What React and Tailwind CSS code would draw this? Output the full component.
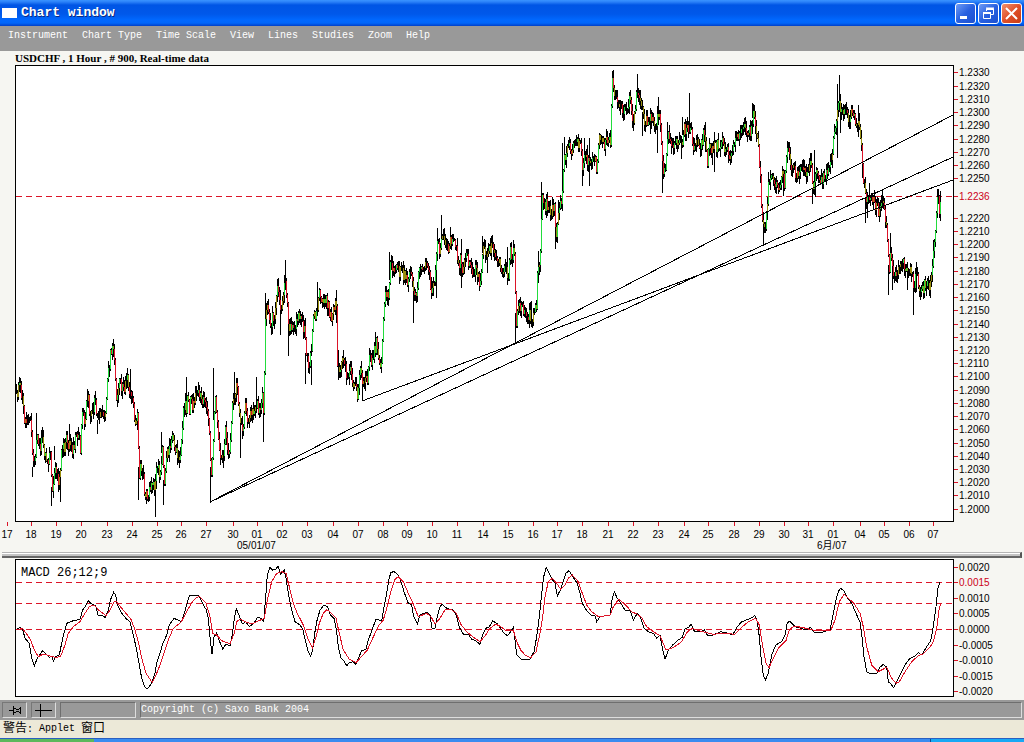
import React from 'react';

const MENU_ITEMS = ['Instrument', 'Chart Type', 'Time Scale', 'View', 'Lines', 'Studies', 'Zoom', 'Help'];

const MONO = "font-['Liberation_Mono','Noto_Sans_CJK_SC',monospace]";

const DATE_TICKS = [
  [7, '17'], [31, '18'], [56, '19'], [81, '20'], [107, '23'], [132, '24'], [157, '25'], [181, '26'],
  [206, '27'], [233, '30'], [257, '01'], [282, '02'], [307, '03'], [333, '04'], [358, '07'], [383, '08'],
  [407, '09'], [432, '10'], [457, '11'], [483, '14'], [508, '15'], [533, '16'], [557, '17'], [582, '18'],
  [608, '21'], [633, '22'], [658, '23'], [684, '24'], [708, '25'], [734, '28'], [759, '29'], [784, '30'],
  [808, '31'], [833, '01'], [860, '04'], [884, '05'], [909, '06'], [933, '07'],
];

const MACD_TICKS = [
  [568, '0.0020'], [583, '0.0015'], [599, '0.0010'], [614, '0.0005'], [630, '0.0000'],
  [646, '-0.0005'], [661, '-0.0010'], [677, '-0.0015'], [692, '-0.0020'],
];

// Every series is kept in sections: an origin, then points on a grid of thirds.
// closes are "x,y", spikes are "x,high,low".
const PRICE = [
  {
    x: 0, y: 320,
    closes: '48,215 58,205 62,225 68,225 72,300 80,310 84,290 92,320 97,440 104,430 108,380 113,350 120,380 126,350 133,400 142,440 150,405 156,510 163,440 170,460 176,490 182,400 187,370 192,400 197,345 203,375 208,345 215,400 222,370 232,345 240,380 245,265 253,300 262,225 268,280 275,275 283,245 293,310 300,260 315,280 322,180 330,105 338,90 343,120 348,230 357,185 370,210 380,175 388,210 397,250 405,310 411,290 417,460 425,430 433,515 445,520 452,490 457,510 465,480 472,430 480,470 486,400 492,490 500,400 510,385 517,350 525,380 538,410 545,360 550,250 558,270 563,230 567,280 570,215 577,270 585,215 600,230 607,255 614,220 622,290 628,370 633,470 638,410 641,300 645,215 650,290 660,420 668,420 674,320 684,400 692,350 695,240 703,215 710,200 716,270 722,330 728,320 735,260 745,320 749,290',
    spikes: '58,177,215 109,280,400 127,320,370 155,500,557 162,377,420 181,480,545 208,313,380 261,207,260 293,300,343 340,60,110 337,68,120 391,148,220 411,275,330 416,440,540 466,500,590 485,335,400 490,480,555 538,400,443 560,172,290 640,145,300 632,440,548 671,400,445 703,155,230 721,320,413 97,440,470',
  },
  {
    x: 250, y: 240,
    closes: '0,515 10,510 20,480 26,520 36,470 41,530 43,300 47,215 52,205 58,255 65,240 75,215 83,135 90,220 97,170 104,100 110,170 116,270 122,250 132,270 140,230 152,250 163,275 168,360 178,370 185,300 190,200 197,225 204,165 213,180 225,170 238,220 244,250 250,195 258,200 261,360 268,385 280,360 290,405 297,385 308,420 320,465 332,390 340,445 350,420 357,350 365,370 378,310 385,360 393,375 400,230 407,150 414,185 420,75 430,105 440,90 455,100 470,120 482,85 490,170 500,150 507,65',
    spikes: '20,410,520 41,500,605 46,158,300 105,60,150 91,150,285 115,200,347 167,340,433 184,360,436 202,127,200 260,150,250 265,330,420 337,430,482 376,275,330 394,350,398 418,35,120 490,150,250',
  },
  {
    x: 420, y: 180,
    closes: '0,250 20,250 35,345 45,270 52,180 57,210 65,160 75,205 90,190 105,185 115,260 120,240 127,290 137,220 145,250 157,290 165,260 180,310 188,200 202,230 213,200 225,225 240,245 247,285 257,240 262,300 270,220 278,220 283,230 287,440 293,385 305,390 322,400 335,425 343,390 349,370 352,250 358,260 362,130 365,60 372,85 380,70 388,95 402,85 407,160 413,110 418,70 427,40',
    spikes: '34,290,357 52,143,230 64,105,180 49,250,355 91,142,200 124,178,325 187,168,220 197,180,250 202,230,280 262,200,315 280,180,250 286,400,490 335,363,435 355,213,310 364,7,110 406,140,208 415,60,130',
  },
  {
    x: 540, y: 65,
    closes: '70,260 78,270 85,245 98,255 110,235 120,240 126,315 133,270 140,285 148,290 155,265 163,270 168,330 177,225 190,240 203,225 210,240 213,120 216,45 222,80 230,115 238,140 248,130 257,140 267,105 277,165 285,150 290,60 298,100 310,170 325,160 335,165 350,170 356,130 361,180 367,310 373,315 380,245 383,190 390,245 405,235 420,235 425,255 430,180 443,200 452,190 460,260 470,230 480,235 490,210 495,215 501,290 508,235 515,260 524,240 533,245 545,235 555,255 572,270 580,240 590,215 600,210 613,195 630,200 635,205 638,160 642,140 648,200 655,245 660,350 664,430 671,490',
    spikes: '74,215,300 67,235,400 127,290,363 134,220,310 148,220,363 142,240,310 216,18,100 292,28,90 308,140,213 331,130,207 352,180,265 355,97,180 367,290,383 383,170,220 448,85,200 428,155,210 424,240,283 496,170,260 524,200,320 517,240,300 638,115,160 670,440,540 686,320,420',
  },
  {
    x: 740, y: 65,
    closes: '73,500 80,410 87,340 95,330 102,360 108,345 117,375 127,330 132,350 137,270 142,245 150,305 158,290 165,330 180,320 192,325 202,320 212,300 219,370 227,320 238,350 255,335 268,320 275,260 283,190 290,140 297,110 303,150 312,145 325,160 335,130 345,180 355,180 362,210 366,310 372,360 378,420 388,385 397,400 410,430 420,440 427,400 435,480 441,510 446,620 452,560 460,650 468,620 480,605 490,600 502,640 508,610 520,660 528,630 535,660 543,690 553,660 562,665 572,650 576,600 582,530 587,450 592,390 597,440 602,400',
    spikes: '90,320,375 129,320,393 142,228,280 218,370,416 224,255,340 226,330,395 292,57,278 298,30,140 302,120,203 355,120,215 366,290,340 376,400,475 383,380,460 388,355,400 427,375,430 446,600,690 452,505,570 457,600,675 502,620,675 520,640,750 530,590,680 592,372,460 598,400,460 602,378,425 486,582,620 543,670,697 580,525,590',
  },
];

const MACD_LINE = [
  { x: 0, y: 550, points: '50,235 62,233 68,238 75,265 88,280 95,325 103,348 112,325 128,302 138,312 148,322 155,318 160,333 167,320 178,315 188,265 200,220 220,212 240,208 248,180 257,168 265,152 275,162 287,168 295,198 308,197 316,203 325,180 332,148 341,127 347,135 352,165 365,190 380,208 390,215 400,255 410,300 418,345 425,385 433,408 441,418 455,400 465,370 470,340 480,310 487,285 500,255 508,225 522,205 545,215 555,182 568,138 585,135 597,137 610,165 618,178 625,205 630,260 636,313 642,262 650,248 657,270 668,297 678,282 690,287 697,255 703,205 709,177 717,195 727,222 737,215 748,230 762,220 772,203 785,205 791,215 798,130 802,75 810,52 818,60 828,57 834,48 842,72 853,60 858,85 865,130 875,180 885,215 900,225 908,237 918,280 925,305 932,318 938,300 944,250 950,215 960,180 972,165 983,170' },
  { x: 330, y: 550, points: '0,193 12,205 20,245 25,290 33,325 42,333 50,347 58,338 68,335 78,343 85,325 95,302 108,298 115,270 128,235 138,207 147,210 155,213 162,170 170,130 176,90 183,67 192,65 205,75 213,95 222,125 235,160 245,165 250,195 262,222 270,195 290,187 300,195 306,235 315,235 322,200 330,170 337,163 350,175 370,180 380,200 388,232 402,255 415,252 425,268 437,272 450,283 458,255 468,235 478,230 488,213 500,220 512,235 522,250 533,257 545,240 550,232 555,270 560,315 575,330 600,327 612,305 620,260 628,200 635,130 641,80 649,52 658,70 668,90 675,100 682,138 692,118 700,92 708,70 717,62 728,80 742,100 750,130 757,160 770,182 782,195 795,198 800,215 810,200 840,195 847,145 853,125 862,145 872,160 885,180 900,180 910,210 922,190 932,203 942,235 955,245 970,250 980,265' },
  { x: 660, y: 550, points: '0,255 8,300 15,328 25,300 38,285 55,270 67,262 76,235 85,233 93,223 103,243 120,245 133,240 143,257 160,255 182,245 205,250 218,255 232,230 245,215 265,208 280,200 284,196 292,215 298,260 303,320 310,375 316,390 325,370 335,315 347,285 365,275 375,255 382,218 390,214 405,230 440,240 452,232 462,247 485,247 510,240 518,200 528,150 535,125 541,115 552,122 560,140 575,160 590,195 600,215 606,260 612,320 620,365 632,372 650,370 660,352 670,343 680,352 685,395 693,402 701,413 710,395 722,370 735,345 750,325 762,320 775,308 785,315 800,290 812,272 820,230 828,170 834,115 840,97' },
];

const SIGNAL_LINE = [
  { x: 0, y: 550, points: '50,238 68,236 80,252 92,270 103,300 115,320 130,312 150,318 170,323 182,318 195,285 205,250 220,230 240,215 255,190 268,170 282,165 298,182 318,197 330,180 342,155 350,155 365,175 380,193 393,208 405,240 415,275 425,325 438,370 457,398 470,370 480,345 492,310 505,270 520,235 543,217 560,185 575,158 590,142 600,140 618,160 630,200 638,250 650,255 665,272 690,281 703,250 710,215 720,207 735,215 755,222 775,213 793,205 803,145 815,95 830,70 845,65 858,70 868,110 880,160 892,190 910,225 925,270 937,293 947,265 958,220 970,190 980,180' },
  { x: 330, y: 550, points: '0,185 18,205 28,250 40,300 58,328 78,338 90,325 112,300 128,265 145,228 160,210 170,175 182,125 195,88 205,80 220,95 235,130 247,155 265,200 290,190 303,200 315,222 330,205 345,180 362,178 378,188 392,222 410,245 430,262 450,275 465,258 480,235 497,222 512,230 530,243 550,240 560,275 572,300 585,315 602,323 618,305 630,250 638,200 645,140 655,95 667,85 680,100 692,118 705,105 715,85 727,75 745,95 755,125 770,165 785,185 805,200 840,196 850,170 866,148 885,163 905,185 920,192 935,203 950,230 970,245' },
  { x: 660, y: 550, points: '0,257 18,300 40,293 65,275 80,248 95,235 120,243 160,253 190,250 225,253 245,232 265,215 287,205 298,225 308,290 318,340 327,353 340,325 355,295 378,272 388,240 402,228 430,233 470,243 512,242 525,210 538,155 552,133 565,145 582,160 600,190 610,230 620,290 635,345 655,365 680,352 695,385 708,400 718,395 735,365 755,335 775,317 790,312 810,292 820,275 830,235 837,180 842,160' },
];

const unpack = (section, key) =>
  section[key].split(' ').map((entry) => {
    const [px, ...ys] = entry.split(',').map(Number);
    return [section.x + px / 3, ...ys.map((v) => section.y + v / 3)];
  });

const toPoints = (sections) =>
  sections
    .flatMap((s) => unpack(s, 'points'))
    .map((p) => p.map((v) => v.toFixed(1)).join(','))
    .join(' ');

// Small deterministic generator, so the hourly bars are the same on every render
const createRandom = (start) => {
  let seed = start;
  return () => {
    seed = (seed * 1664525 + 1013904223) % 4294967296;
    return seed / 4294967296;
  };
};

const buildBars = () => {
  const random = createRandom(900);
  const closes = PRICE.flatMap((s) => unpack(s, 'closes'));
  const paths = { wick: '', up: '', down: '', flat: '' };
  const add = (key, x, top, bottom) => {
    paths[key] += `M${x} ${Math.round(top)}V${Math.round(bottom)}`;
  };

  PRICE.flatMap((s) => unpack(s, 'spikes')).forEach(([x, high, low]) => {
    add('wick', Math.floor(x) + 0.5, high, low);
  });

  let i = 0;
  let prev = closes[0][1];
  for (let x = 16; x <= 940; x += 1) {
    while (i < closes.length - 2 && closes[i + 1][0] < x) i += 1;
    const [x0, y0] = closes[i];
    const [x1, y1] = closes[i + 1];
    const t = Math.min(1, Math.max(0, (x - x0) / (x1 - x0)));
    const close = y0 + (y1 - y0) * t + (random() - 0.5) * 13;
    const top = Math.min(prev, close);
    const bottom = Math.max(prev, close);
    const move = bottom - top;
    const reach = move > 14 ? 1 : 7;
    add('wick', x + 0.5, top - random() * reach - 1, bottom + random() * reach + 1);
    if (move > 2) {
      const mixed = move < 12 && random() < 0.4;
      add(mixed ? 'flat' : close < prev ? 'up' : 'down', x + 0.5, top, bottom);
    }
    prev = close;
  }
  return paths;
};

const BARS = buildBars();

const AxisLabel = ({ x, y, red, children }) => (
  <text x={x} y={y} className={red ? 'fill-[#cc0018]' : 'fill-black'}>{children}</text>
);

const PriceChart = () => (
  <svg viewBox="0 65 1024 487" className="block w-full font-['Liberation_Sans','Noto_Sans_CJK_SC',sans-serif] text-[10px]" role="img" aria-label="USDCHF price chart">
    <rect x="15.5" y="65.5" width="938" height="456" fill="#fff" stroke="#000" shapeRendering="crispEdges" />
    <g fill="none" shapeRendering="crispEdges">
      <path d="M16 196.5H953" stroke="#dc1428" strokeDasharray="6 4" />
      <path d={BARS.wick} stroke="#000" />
      <path d={BARS.flat} stroke="#9a9010" />
      <path d={BARS.down} stroke="#dc1428" />
      <path d={BARS.up} stroke="#22dc3c" />
      <path d="M210 502L953 115M210 502L953 157M362 401L953 180" stroke="#000" />
    </g>

    {Array.from({ length: 34 }, (_, i) => i)
      .filter((i) => i !== 9 && i !== 10)
      .map((i) => {
        const y = Math.round(73.4 + i * 13.22);
        return (
          <g key={i}>
            <path d={`M954 ${y - 0.5}h4`} stroke="#dc1428" />
            <AxisLabel x={959} y={y + 3}>{(1.233 - i * 0.001).toFixed(4)}</AxisLabel>
          </g>
        );
      })}
    <path d="M954 196.5h4" stroke="#dc1428" />
    <AxisLabel x={959} y={200} red>1.2236</AxisLabel>

    {DATE_TICKS.map(([x, label]) => (
      <g key={x} textAnchor="middle">
        <path d={`M${x + 0.5} 522v4`} stroke="#dc1428" />
        <AxisLabel x={x} y={538}>{label}</AxisLabel>
      </g>
    ))}
    <AxisLabel x={237} y={549}>05/01/07</AxisLabel>
    <AxisLabel x={817} y={549}>6月/07</AxisLabel>
  </svg>
);

const MacdChart = () => (
  <svg viewBox="0 559 1024 141" className="block w-full font-['Liberation_Sans',sans-serif] text-[10px]" role="img" aria-label="MACD chart">
    <rect x="15.5" y="559.5" width="938" height="137" fill="#fff" stroke="#000" shapeRendering="crispEdges" />
    <g fill="none" shapeRendering="crispEdges">
      {[582, 603, 629].map((y) => (
        <line key={y} x1="16" y1={y + 0.5} x2="953" y2={y + 0.5} stroke="#dc1428" strokeDasharray="6 4" />
      ))}
      <polyline points={toPoints(MACD_LINE)} stroke="#000" />
      <polyline points={toPoints(SIGNAL_LINE)} stroke="#dc1428" />
    </g>
    <text x="21" y="576" className="fill-black font-['Liberation_Mono',monospace] text-[12px]">MACD 26;12;9</text>
    {MACD_TICKS.map(([y, label]) => (
      <g key={label}>
        <path d={`M954 ${y - 0.5}h4`} stroke="#dc1428" />
        <AxisLabel x={959} y={y + 3} red={label === '0.0015'}>{label}</AxisLabel>
      </g>
    ))}
  </svg>
);

const WindowButton = ({ label, tone, children }) => (
  <button type="button" aria-label={label} className={`flex size-[21px] items-center justify-center rounded-[3px] border border-white ${tone}`}>
    <svg viewBox="0 0 19 19" className="size-[19px]" fill="none" stroke="#fff" aria-hidden="true">
      {children}
    </svg>
  </button>
);

const TitleBar = () => (
  <header className="flex h-[26px] items-center bg-[linear-gradient(to_bottom,#3a93ff_0,#2a80f8_2px,#0055e5_5px,#0058ea_14px,#0068ff_20px,#0066fa_23px,#0040c8_26px)] pl-[2px] pr-[2px]">
    <span className="h-[10px] w-[15px] bg-white" />
    <h1 className={`${MONO} ml-1 flex-1 text-[13px] leading-[26px] font-bold text-white [text-shadow:1px_1px_0_#0a2a80]`}>
      Chart window
    </h1>
    <div className="flex gap-[2px]">
      <WindowButton label="Minimize" tone="bg-linear-to-br from-[#6e9bf5] via-[#2860e0] to-[#1c50d0]">
        <path d="M4 13.5h7" strokeWidth="3" />
      </WindowButton>
      <WindowButton label="Restore" tone="bg-linear-to-br from-[#6e9bf5] via-[#2860e0] to-[#1c50d0]">
        <path d="M7.5 7V4.5h7v6H12M7 4h8" />
        <path d="M4.5 8.5h7v6h-7zM4 8.5h8" />
        <path d="M4 9.5h8M7 5.5h8" />
      </WindowButton>
      <WindowButton label="Close" tone="bg-linear-to-br from-[#f0906c] via-[#e05028] to-[#c83c14]">
        <path d="M4 4l11 11M15 4l-11 11" strokeWidth="2" />
      </WindowButton>
    </div>
  </header>
);

const MenuBar = () => (
  <nav className={`${MONO} flex h-[25px] items-center gap-3.5 bg-[#999] pb-[5px] pl-2 text-[10px] leading-[12px] text-white`}>
    {MENU_ITEMS.map((item) => (
      <button key={item} type="button">{item}</button>
    ))}
  </nav>
);

const Splitter = () => (
  <div className="flex h-[7px] border-b border-[#f6f6f2] px-[2px]">
    <div className="flex-1 border-t border-r-2 border-b-2 border-t-[#b4b4b4] border-r-[#555] border-b-[#666] bg-[#c4c4c4]">
      <div className="h-px bg-white" />
    </div>
  </div>
);

const StatusBar = () => (
  <footer className={`${MONO} flex h-5 items-center gap-1 bg-[#999] px-[2px] text-[10px] leading-[12px] text-white`}>
    <button type="button" aria-label="Pin" className="flex h-4 w-[25px] items-center justify-center border border-t-[#777] border-r-[#ddd] border-b-[#ddd] border-l-[#777]">
      <svg viewBox="0 0 12 9" className="h-[9px] w-3" fill="none" stroke="#000" shapeRendering="crispEdges" aria-hidden="true">
        <path d="M0 4.5h4M4.5 0v9M5 2.5h2M5 6.5h2M7 3.5h3M7 5.5h3M10 2.5h1M10 6.5h1M11.5 1v7" />
      </svg>
    </button>
    <button type="button" aria-label="Crosshair" className="flex h-4 w-[25px] items-center justify-center border border-t-[#777] border-r-[#ddd] border-b-[#ddd] border-l-[#777]">
      <svg viewBox="0 0 17 13" className="h-[13px] w-[17px]" fill="none" stroke="#000" shapeRendering="crispEdges" aria-hidden="true">
        <path d="M0 6.5h17M5.5 0v13" />
      </svg>
    </button>
    <div className="h-4 w-[76px] border border-t-[#6e6e6e] border-r-[#ddd] border-b-[#ddd] border-l-[#6e6e6e]" />
    <div className="flex h-4 flex-1 items-center border border-t-[#6e6e6e] border-r-[#ddd] border-b-[#ddd] border-l-[#6e6e6e]">
      Copyright (c) Saxo Bank 2004
    </div>
  </footer>
);

const App = () => {
  return (
    <div className="w-full overflow-hidden bg-[#f6f6f2]">
      <TitleBar />
      <MenuBar />
      <main>
        <p className="h-[14px] pl-[15px] font-['Liberation_Serif',serif] text-[11px] leading-[14px] font-bold whitespace-pre text-black">
          USDCHF , 1 Hour , # 900, Real-time data
        </p>
        <PriceChart />
        <Splitter />
        <MacdChart />
      </main>
      <StatusBar />
      <p className={`${MONO} flex h-[18px] items-center gap-1.5 bg-[#ece9d8] pl-[3px] text-[10px] leading-[16px] text-black`}>
        <span><span className="text-[12px]">警告</span>:</span>
        <span>Applet</span>
        <span className="text-[12px]">窗口</span>
      </p>
      <div className="flex h-1 border-t border-[#2a5fc0] bg-[#3a8cf0]">
        <div className="w-[94px] bg-[#5cb85c]" />
        <div className="flex-1" />
        <div className="w-[94px] border-l border-[#0a4a90] bg-[#18a8f4]" />
      </div>
    </div>
  );
};

export default App;
